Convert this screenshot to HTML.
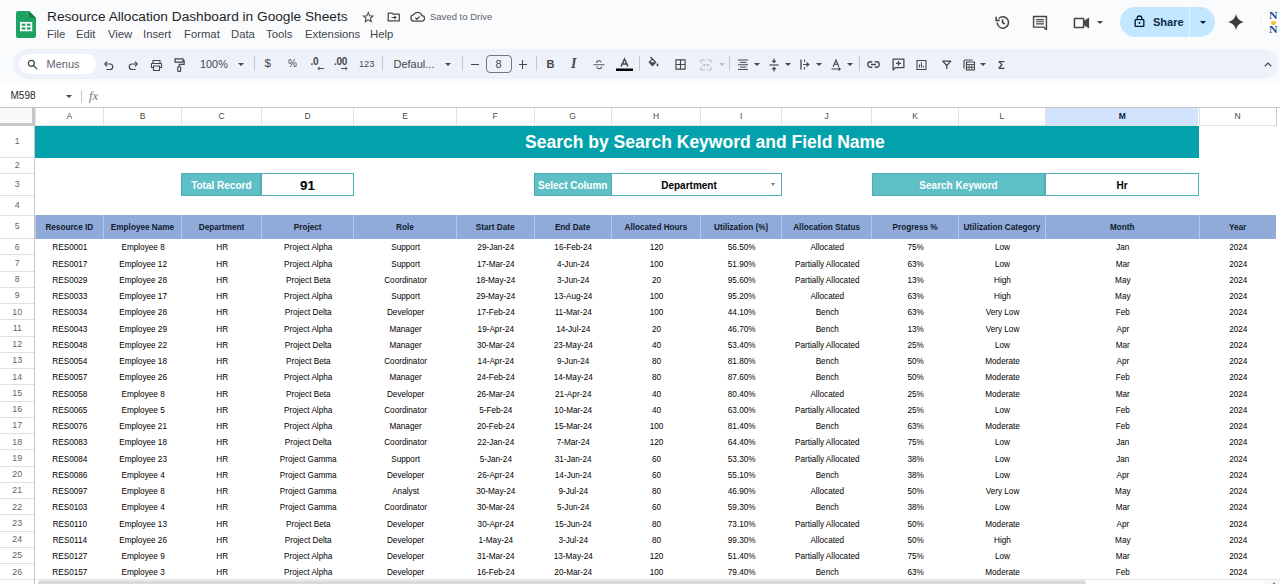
<!DOCTYPE html>
<html><head><meta charset="utf-8">
<style>
*{margin:0;padding:0;box-sizing:border-box}
html,body{width:1280px;height:584px;overflow:hidden;background:#f9fbfd;font-family:"Liberation Sans",sans-serif;position:relative}
.a{position:absolute}
.ico{position:absolute;fill:none;stroke:#444746;stroke-width:1.6}
#doctitle{position:absolute;left:47px;top:9px;font-size:13.7px;color:#1f1f1f;white-space:nowrap;letter-spacing:0}
#menu{position:absolute;left:47px;top:27.8px;font-size:11.3px;color:#444649;white-space:nowrap}
#menu span{position:absolute;top:0}
#saved{position:absolute;left:430px;top:11px;font-size:9.5px;color:#5f6368;white-space:nowrap}
#toolbar{position:absolute;left:13px;top:49px;width:1265px;height:30px;border-radius:15px;background:#edf2fa}
#search{position:absolute;left:19px;top:54px;width:77px;height:20px;border-radius:10px;background:#fff}
.tt{position:absolute;font-size:11px;color:#444746;white-space:nowrap}
.sep{position:absolute;top:56px;width:1px;height:15px;background:#c7c7c7}
.ddt{position:absolute;width:0;height:0;border-left:3px solid transparent;border-right:3px solid transparent;border-top:3px solid #444746}
#fbar{position:absolute;left:0;top:84px;width:1280px;height:24px;background:#fff}
#grid{position:absolute;left:0;top:107px;width:1280px;height:477px;background:#fff}
.colhdr{position:absolute;left:0;width:1280px;background:#fff;border-top:1px solid #c4c7c5}
.ch{position:absolute;text-align:center;font-size:8.5px;color:#444746;border-left:1px solid #e1e3e1;border-bottom:1px solid #e1e3e1}
.ch.sel{background:#d3e3fd;color:#0b57d0;font-weight:bold;color:#041e49}
.rh{position:absolute;left:0;width:34.5px;text-align:center;font-size:8.8px;color:#5f6368;background:#fff}
.hl{position:absolute;left:0;width:34.5px;height:1px;background:#e0e0e0}
.vl{position:absolute;width:1px;background:#c7c7c7}
.title{position:absolute;background:#02a2ad}
.titletxt{position:absolute;font-size:17.5px;font-weight:bold;color:#fff;white-space:nowrap}
.lbl{position:absolute;background:#5ec0c6;border:1px solid #4eaeb5;color:#fff;font-weight:bold;font-size:10px;text-align:center;white-space:nowrap;padding-top:.8px}
.val{position:absolute;background:#fff;border:1px solid #4eaeb5;color:#000;font-weight:bold;font-size:10px;text-align:center;white-space:nowrap;padding-top:.8px}
.val.big{font-size:13.4px}
.val.ddv{padding-right:15px}
.dd{position:absolute;width:0;height:0;border-left:2.5px solid transparent;border-right:2.5px solid transparent;border-top:3px solid #777}
.hdrrow{position:absolute;background:#90abd9}
.th{position:absolute;text-align:center;font-size:8.2px;font-weight:bold;color:#111a2e;white-space:nowrap;border-left:1px solid #b4c8ea;padding-top:.6px}
.td{position:absolute;text-align:center;font-size:8.2px;color:#000;white-space:nowrap;padding-top:1.8px}
#hscroll{position:absolute;left:37.5px;top:579.6px;width:1048px;height:8px;border-radius:3px;background:#dadade;border-top:1.4px solid #ececef}
</style></head>
<body>
<!-- Sheets logo -->
<svg class="a" style="left:16px;top:11px" width="20" height="27" viewBox="0 0 20 27">
<path d="M2 0H13L20 7V25Q20 27 18 27H2Q0 27 0 25V2Q0 0 2 0Z" fill="#1ea362"/>
<path d="M13 0L20 7H15Q13 7 13 5Z" fill="#188038"/>
<rect x="4.8" y="11.8" width="10.6" height="7.6" fill="none" stroke="#fff" stroke-width="1.7"/>
<line x1="4.8" y1="15.6" x2="15.4" y2="15.6" stroke="#fff" stroke-width="1.5"/>
<line x1="10.1" y1="11.8" x2="10.1" y2="19.4" stroke="#fff" stroke-width="1.5"/>
</svg>
<div id="doctitle">Resource Allocation Dashboard in Google Sheets</div>
<div id="menu"><span style="left:0">File</span><span style="left:29px">Edit</span><span style="left:61px">View</span><span style="left:96px">Insert</span><span style="left:137px">Format</span><span style="left:184px">Data</span><span style="left:219px">Tools</span><span style="left:258px">Extensions</span><span style="left:323px">Help</span></div>
<!-- star -->
<svg class="a" style="left:362px;top:11px" width="12.5" height="12.5" viewBox="0 0 24 24"><path d="M12 3l2.6 6.1 6.6.5-5 4.3 1.5 6.5L12 17l-5.7 3.4 1.5-6.5-5-4.3 6.6-.5z" fill="none" stroke="#444746" stroke-width="2"/></svg>
<!-- folder -->
<svg class="a" style="left:386.5px;top:12px" width="13.5" height="10" viewBox="0 0 24 18"><path d="M2 2h7l2 2h11v12H2z" fill="none" stroke="#444746" stroke-width="2.2" stroke-linejoin="round"/><path d="M8 10h8M13 7l3 3-3 3" fill="none" stroke="#444746" stroke-width="2"/></svg>
<!-- cloud -->
<svg class="a" style="left:410px;top:11px" width="15" height="11" viewBox="0 0 24 17"><path d="M6 16H18.5A4.5 4.5 0 0 0 19 7A7 7 0 0 0 6 5.5A5.3 5.3 0 0 0 6 16Z" fill="none" stroke="#444746" stroke-width="2"/><path d="M8.5 10.5l2.5 2.5 4.5-4.5" fill="none" stroke="#444746" stroke-width="2"/></svg>
<div id="saved">Saved to Drive</div>

<!-- right top icons -->
<svg class="a" style="left:994px;top:14px" width="17" height="17" viewBox="0 0 24 24"><path d="M4.5 12a8 8 0 1 0 2.3-5.6" fill="none" stroke="#444746" stroke-width="2.2"/><path d="M3 4v5h5" fill="none" stroke="#444746" stroke-width="2.2"/><path d="M12 7.5V12l3.5 2.3" fill="none" stroke="#444746" stroke-width="2.2"/></svg>
<svg class="a" style="left:1032px;top:15px" width="16" height="15" viewBox="0 0 22 21"><path d="M2 2H20V21L16.5 17H2Z" fill="none" stroke="#444746" stroke-width="2"/><path d="M5.5 6.5h11M5.5 9.5h11M5.5 12.5h11" stroke="#444746" stroke-width="1.6"/></svg>
<svg class="a" style="left:1073px;top:17px" width="17" height="12" viewBox="0 0 24 17"><path d="M2 2H15V15H2Z" fill="none" stroke="#444746" stroke-width="2.2" stroke-linejoin="round"/><path d="M15 6.5L22 2V15L15 10.5" fill="#444746" stroke="#444746" stroke-width="1.5"/></svg>
<div class="ddt" style="left:1097px;top:21px"></div>
<div class="a" style="left:1120px;top:7px;width:95px;height:30px;border-radius:15px;background:#c2e7ff"></div>
<div class="a" style="left:1189px;top:7px;width:1px;height:30px;background:#f9fbfd;opacity:.7"></div>
<svg class="a" style="left:1134px;top:15px" width="11" height="12" viewBox="0 0 16 18"><rect x="1.5" y="7" width="13" height="10" rx="1" fill="none" stroke="#001d35" stroke-width="2"/><path d="M4.5 7V5a3.5 3.5 0 0 1 7 0v2" fill="none" stroke="#001d35" stroke-width="2"/><circle cx="8" cy="12" r="1.5" fill="#001d35"/></svg>
<div class="a" style="left:1153px;top:15.5px;font-size:11px;color:#0d2a45;font-weight:bold;letter-spacing:0">Share</div>
<div class="ddt" style="left:1200px;top:21px;border-top-color:#001d35"></div>
<svg class="a" style="left:1228px;top:14px" width="16" height="16" viewBox="0 0 24 24"><path d="M12 0C13.5 6 16.5 10 24 12C16.5 14 13.5 18 12 24C10.5 18 7.5 14 0 12C7.5 10 10.5 6 12 0Z" fill="#3c3c3e"/></svg>
<div class="a" style="left:1261px;top:10px;width:23px;height:23px;border-radius:12px;background:#fff;border:1px solid #eceff3"></div>
<div class="a" style="left:1268.5px;top:11.5px;font-family:'Liberation Serif',serif;font-size:9.5px;font-weight:bold;color:#1a4f96;line-height:9px;transform:scaleX(1.25);transform-origin:left">N</div>
<div class="a" style="left:1271px;top:20.5px;width:4.5px;height:4.5px;border-radius:2.5px;background:#f2c230"></div>
<div class="a" style="left:1268.5px;top:26px;font-family:'Liberation Serif',serif;font-size:9.5px;font-weight:bold;color:#1a4f96;line-height:9px;transform:scaleX(1.25);transform-origin:left">N</div>

<!-- toolbar -->
<div id="toolbar"></div>
<div id="search"></div>
<svg class="a" style="left:27px;top:59px" width="11" height="11" viewBox="0 0 24 24"><circle cx="9.5" cy="9.5" r="6.5" fill="none" stroke="#444746" stroke-width="2.8"/><path d="M14.5 14.5L22 22" stroke="#444746" stroke-width="2.8"/></svg>
<div class="tt" style="left:46.5px;top:57.5px;font-size:11px;color:#5f6368">Menus</div>
<!-- undo/redo -->
<svg class="a" style="left:103.7px;top:60.7px" width="10" height="10" viewBox="0 0 20 20"><path d="M2 6H12A5.5 5.5 0 0 1 12 17H5" fill="none" stroke="#444746" stroke-width="2.4"/><path d="M6 1.5L1.5 6L6 10.5" fill="none" stroke="#444746" stroke-width="2.4"/></svg>
<svg class="a" style="left:127.7px;top:60.7px" width="10" height="10" viewBox="0 0 20 20"><path d="M18 6H8A5.5 5.5 0 0 0 8 17H15" fill="none" stroke="#444746" stroke-width="2.4"/><path d="M14 1.5L18.5 6L14 10.5" fill="none" stroke="#444746" stroke-width="2.4"/></svg>
<!-- print -->
<svg class="a" style="left:150px;top:59.5px" width="13" height="11" viewBox="0 0 24 22"><path d="M5 6V1H19V6" fill="none" stroke="#444746" stroke-width="2.2"/><path d="M5 15H2V7H22V15H19" fill="none" stroke="#444746" stroke-width="2.2" stroke-linejoin="round"/><path d="M6 12H18V21H6Z" fill="none" stroke="#444746" stroke-width="2.2"/></svg>
<!-- paint format -->
<svg class="a" style="left:174px;top:58px" width="11" height="14" viewBox="0 0 18 24"><path d="M1.5 1.5H15V7H1.5Z" fill="none" stroke="#444746" stroke-width="2.2"/><path d="M15 4.3H17V11H8.5V15" fill="none" stroke="#444746" stroke-width="2"/><rect x="6" y="15" width="5" height="8" rx="1" fill="none" stroke="#444746" stroke-width="2"/></svg>
<div class="tt" style="left:200px;top:58px;font-size:10.9px">100%</div>
<div class="ddt" style="left:237.5px;top:62.5px"></div>
<div class="sep" style="left:254px"></div>
<div class="tt" style="left:264.5px;top:57px;font-size:11.5px">$</div>
<div class="tt" style="left:288px;top:58px;font-size:10px">%</div>
<div class="tt" style="left:310.5px;top:55.5px;font-size:10px;font-weight:bold;letter-spacing:-.3px">.0</div>
<svg class="a" style="left:317px;top:66px" width="7" height="5" viewBox="0 0 9 5"><path d="M9 2.5H1.5M3.5 .5L1 2.5 3.5 4.5" fill="none" stroke="#444746" stroke-width="1.2"/></svg>
<div class="tt" style="left:334px;top:55.5px;font-size:10px;font-weight:bold;letter-spacing:-.3px">.00</div>
<svg class="a" style="left:341px;top:66px" width="7" height="5" viewBox="0 0 9 5"><path d="M0 2.5H7.5M5.5 .5L8 2.5 5.5 4.5" fill="none" stroke="#444746" stroke-width="1.2"/></svg>
<div class="tt" style="left:359px;top:58.5px;font-size:9.2px">123</div>
<div class="sep" style="left:381.5px"></div>
<div class="tt" style="left:393.5px;top:57.5px;font-size:11px">Defaul...</div>
<div class="ddt" style="left:444.5px;top:62.5px"></div>
<div class="sep" style="left:462px"></div>
<div class="a" style="left:470.5px;top:64px;width:8px;height:1.2px;background:#444746"></div>
<div class="a" style="left:486px;top:55px;width:26px;height:18px;border:1px solid #747775;border-radius:4px"></div>
<div class="tt" style="left:495.5px;top:57.5px;font-size:11px">8</div>
<div class="a" style="left:518.5px;top:64px;width:8.5px;height:1.2px;background:#444746"></div>
<div class="a" style="left:522.2px;top:60px;width:1.2px;height:8.5px;background:#444746"></div>
<div class="sep" style="left:536px"></div>
<div class="tt" style="left:546.5px;top:57.5px;font-size:11px;font-weight:bold">B</div>
<div class="tt" style="left:571px;top:55.5px;font-size:14px;font-style:italic;font-family:'Liberation Serif',serif;font-weight:bold">I</div>
<svg class="a" style="left:593px;top:60px" width="12" height="9.5" viewBox="0 0 26 24" preserveAspectRatio="none"><path d="M1 12H25" stroke="#444746" stroke-width="2.2"/><path d="M18 5.5C17 2.5 14.5 2 13 2C9.5 2 7.5 4 8.3 7M8 17C9 21 12 22 13 22C17 22 19 20 18.2 16.5" fill="none" stroke="#444746" stroke-width="2.4"/></svg>
<svg class="a" style="left:615.5px;top:57px" width="17" height="14" viewBox="0 0 17 14"><path d="M5 9.5L8.5 2L12 9.5M6.3 7H10.7" fill="none" stroke="#444746" stroke-width="1.5"/><rect x="0" y="11.5" width="17" height="2.5" fill="#000"/></svg>
<div class="sep" style="left:639px"></div>
<svg class="a" style="left:647px;top:55.5px" width="12" height="13" viewBox="0 0 24 26"><path d="M7 2L11 6M4.5 12.5L11 6L17.5 12.5L11 19Z" fill="none" stroke="#444746" stroke-width="2.4" stroke-linejoin="round"/><path d="M4.5 12.5H17.5L11 19Z" fill="#444746"/><path d="M21 14C22.5 16.5 23 17.5 23 18.5A2 2 0 0 1 19 18.5C19 17.5 19.5 16.5 21 14Z" fill="#444746"/></svg>
<svg class="a" style="left:675px;top:59px" width="11" height="11" viewBox="0 0 24 24"><path d="M2 2H22V22H2ZM12 2V22M2 12H22" fill="none" stroke="#444746" stroke-width="2.4"/></svg>
<svg class="a" style="left:699.5px;top:59px" width="12" height="12" viewBox="0 0 24 24"><path d="M2 8V2H10M14 2H22V8M2 16V22H10M14 22H22V16M5 12H10M8 10L10 12 8 14M19 12H14M16 10L14 12 16 14" fill="none" stroke="#b9bcbd" stroke-width="2.2"/></svg>
<div class="ddt" style="left:719px;top:63px;border-top-color:#b9bcbd"></div>
<div class="sep" style="left:729px"></div>
<svg class="a" style="left:737.5px;top:59px" width="10.5" height="11.5" viewBox="0 0 21 23"><path d="M0 2H21M4 6.75H17M0 11.5H21M4 16.25H17M0 21H21" stroke="#444746" stroke-width="2"/></svg>
<div class="ddt" style="left:753.5px;top:63px"></div>
<svg class="a" style="left:769px;top:58px" width="10" height="14" viewBox="0 0 20 28"><path d="M1 14H19" stroke="#444746" stroke-width="2.4"/><path d="M10 1V9M6.5 5.5L10 9 13.5 5.5M10 27V19M6.5 22.5L10 19 13.5 22.5" fill="none" stroke="#444746" stroke-width="2.4"/></svg>
<div class="ddt" style="left:784.5px;top:63px"></div>
<svg class="a" style="left:799.5px;top:59px" width="10" height="11" viewBox="0 0 20 22"><path d="M2 1V21" stroke="#444746" stroke-width="2.6"/><path d="M9 1V6M9 16V21" stroke="#444746" stroke-width="2"/><path d="M6 11H17M13 7L17.5 11 13 15" fill="none" stroke="#444746" stroke-width="2.4"/></svg>
<div class="ddt" style="left:815.5px;top:63px"></div>
<svg class="a" style="left:831px;top:59px" width="10.5" height="11.5" viewBox="0 0 22 24"><path d="M4.5 16L10.5 2L16.5 16M7 11H14" fill="none" stroke="#444746" stroke-width="2.4"/><path d="M1 21H19M16 18L19.5 21 16 24" fill="none" stroke="#444746" stroke-width="2.2"/></svg>
<div class="ddt" style="left:847px;top:63px"></div>
<div class="sep" style="left:859px"></div>
<svg class="a" style="left:867px;top:60px" width="13" height="9" viewBox="0 0 26 16"><path d="M10.5 2.5H7A5.5 5.5 0 0 0 7 13.5H10.5M15.5 2.5H19A5.5 5.5 0 0 1 19 13.5H15.5M8 8H18" fill="none" stroke="#444746" stroke-width="2.6"/></svg>
<svg class="a" style="left:891.5px;top:58px" width="13" height="14" viewBox="0 0 24 26"><path d="M2 2H22V18H6L2 22.5Z" fill="none" stroke="#444746" stroke-width="2.4" stroke-linejoin="round"/><path d="M12 5.5V14.5M7.5 10H16.5" stroke="#444746" stroke-width="2.4"/></svg>
<svg class="a" style="left:916px;top:59px" width="11" height="12" viewBox="0 0 22 22"><path d="M2 2H20V20H2Z" fill="none" stroke="#444746" stroke-width="2.2"/><path d="M7 16V10M11 16V6M15 16V13" stroke="#444746" stroke-width="2.2"/></svg>
<svg class="a" style="left:942px;top:59.5px" width="9.5" height="9.5" viewBox="0 0 20 20"><path d="M1.5 2.5H18.5L10 11.5ZM10 11V19" fill="none" stroke="#444746" stroke-width="2.6" stroke-linejoin="round"/></svg>
<svg class="a" style="left:962.5px;top:58.5px" width="12.5" height="12" viewBox="0 0 25 24"><path d="M2 19V4Q2 2 4 2H19" fill="none" stroke="#444746" stroke-width="2.2"/><path d="M7 6H23V22H7Z" fill="none" stroke="#444746" stroke-width="2.4" stroke-linejoin="round"/><path d="M7 11H23M7 16.5H23M12.3 11V22M17.7 11V22" stroke="#444746" stroke-width="1.8"/></svg>
<div class="ddt" style="left:980px;top:63px"></div>
<div class="tt" style="left:998px;top:58.5px;font-size:11.5px;font-weight:bold">&#931;</div>
<svg class="a" style="left:1264px;top:62px" width="8" height="5" viewBox="0 0 16 10"><path d="M1.5 8.5L8 2L14.5 8.5" fill="none" stroke="#444746" stroke-width="2.4"/></svg>

<!-- formula bar -->
<div id="fbar"></div>
<div class="tt" style="left:10.5px;top:90px;font-size:10px;color:#1f1f1f">M598</div>
<div class="ddt" style="left:66px;top:94.5px"></div>
<div class="a" style="left:80.5px;top:90px;width:1px;height:13px;background:#c7c7c7"></div>
<div class="tt" style="left:89px;top:89px;font-size:12.5px;font-style:italic;font-family:'Liberation Serif',serif;color:#70757a">fx</div>

<div id="grid"></div>
<div class="colhdr" style="top:107px;height:18.7px"></div>
<div class="ch" style="left:34.5px;width:68.6px;top:108px;height:17.7px;line-height:17.5px">A</div>
<div class="ch" style="left:103.1px;width:77.8px;top:108px;height:17.7px;line-height:17.5px">B</div>
<div class="ch" style="left:180.9px;width:80.3px;top:108px;height:17.7px;line-height:17.5px">C</div>
<div class="ch" style="left:261.2px;width:91.9px;top:108px;height:17.7px;line-height:17.5px">D</div>
<div class="ch" style="left:353.1px;width:102.8px;top:108px;height:17.7px;line-height:17.5px">E</div>
<div class="ch" style="left:455.9px;width:77.6px;top:108px;height:17.7px;line-height:17.5px">F</div>
<div class="ch" style="left:533.5px;width:77.3px;top:108px;height:17.7px;line-height:17.5px">G</div>
<div class="ch" style="left:610.8px;width:89.3px;top:108px;height:17.7px;line-height:17.5px">H</div>
<div class="ch" style="left:700.1px;width:81px;top:108px;height:17.7px;line-height:17.5px">I</div>
<div class="ch" style="left:781.1px;width:90.1px;top:108px;height:17.7px;line-height:17.5px">J</div>
<div class="ch" style="left:871.2px;width:86.7px;top:108px;height:17.7px;line-height:17.5px">K</div>
<div class="ch" style="left:957.9px;width:87px;top:108px;height:17.7px;line-height:17.5px">L</div>
<div class="ch sel" style="left:1044.9px;width:153.6px;top:108px;height:17.7px;line-height:17.5px">M</div>
<div class="ch" style="left:1198.5px;width:77.3px;top:108px;height:17.7px;line-height:17.5px">N</div>
<div class="vl" style="left:1275.8px;top:107px;height:18.7px"></div>
<div class="rh" style="top:125.7px;height:31.9px;line-height:31.9px">1</div>
<div class="rh" style="top:157.6px;height:15.8px;line-height:15.8px">2</div>
<div class="rh" style="top:173.4px;height:22px;line-height:22px">3</div>
<div class="rh" style="top:195.4px;height:20px;line-height:20px">4</div>
<div class="rh" style="top:215.4px;height:23.2px;line-height:23.2px">5</div>
<div class="rh" style="top:238.6px;height:16.25px;line-height:16.25px">6</div>
<div class="rh" style="top:254.85px;height:16.25px;line-height:16.25px">7</div>
<div class="rh" style="top:271.1px;height:16.25px;line-height:16.25px">8</div>
<div class="rh" style="top:287.35px;height:16.25px;line-height:16.25px">9</div>
<div class="rh" style="top:303.6px;height:16.25px;line-height:16.25px">10</div>
<div class="rh" style="top:319.85px;height:16.25px;line-height:16.25px">11</div>
<div class="rh" style="top:336.1px;height:16.25px;line-height:16.25px">12</div>
<div class="rh" style="top:352.35px;height:16.25px;line-height:16.25px">13</div>
<div class="rh" style="top:368.6px;height:16.25px;line-height:16.25px">14</div>
<div class="rh" style="top:384.85px;height:16.25px;line-height:16.25px">15</div>
<div class="rh" style="top:401.1px;height:16.25px;line-height:16.25px">16</div>
<div class="rh" style="top:417.35px;height:16.25px;line-height:16.25px">17</div>
<div class="rh" style="top:433.6px;height:16.25px;line-height:16.25px">18</div>
<div class="rh" style="top:449.85px;height:16.25px;line-height:16.25px">19</div>
<div class="rh" style="top:466.1px;height:16.25px;line-height:16.25px">20</div>
<div class="rh" style="top:482.35px;height:16.25px;line-height:16.25px">21</div>
<div class="rh" style="top:498.6px;height:16.25px;line-height:16.25px">22</div>
<div class="rh" style="top:514.85px;height:16.25px;line-height:16.25px">23</div>
<div class="rh" style="top:531.1px;height:16.25px;line-height:16.25px">24</div>
<div class="rh" style="top:547.35px;height:16.25px;line-height:16.25px">25</div>
<div class="rh" style="top:563.6px;height:16.25px;line-height:16.25px">26</div>
<div class="hl" style="top:157.1px"></div>
<div class="hl" style="top:172.9px"></div>
<div class="hl" style="top:194.9px"></div>
<div class="hl" style="top:214.9px"></div>
<div class="hl" style="top:238.1px"></div>
<div class="hl" style="top:254.35px"></div>
<div class="hl" style="top:270.6px"></div>
<div class="hl" style="top:286.85px"></div>
<div class="hl" style="top:303.1px"></div>
<div class="hl" style="top:319.35px"></div>
<div class="hl" style="top:335.6px"></div>
<div class="hl" style="top:351.85px"></div>
<div class="hl" style="top:368.1px"></div>
<div class="hl" style="top:384.35px"></div>
<div class="hl" style="top:400.6px"></div>
<div class="hl" style="top:416.85px"></div>
<div class="hl" style="top:433.1px"></div>
<div class="hl" style="top:449.35px"></div>
<div class="hl" style="top:465.6px"></div>
<div class="hl" style="top:481.85px"></div>
<div class="hl" style="top:498.1px"></div>
<div class="hl" style="top:514.35px"></div>
<div class="hl" style="top:530.6px"></div>
<div class="hl" style="top:546.85px"></div>
<div class="hl" style="top:563.1px"></div>
<div class="hl" style="top:579.35px"></div>
<div class="vl" style="left:34.2px;top:125.7px;height:460px"></div>
<div class="title" style="left:35px;width:1164px;top:125.7px;height:31.9px"></div>
<div class="titletxt" style="left:525px;padding-top:1.5px;top:125.7px;height:31.9px;line-height:31.9px">Search by Search Keyword and Field Name</div>
<div class="lbl" style="left:181.2px;width:80.3px;top:173.2px;height:22.6px;line-height:22.6px">Total Record</div>
<div class="val big" style="left:261px;width:93px;top:173.2px;height:22.6px;line-height:22.6px">91</div>
<div class="lbl" style="left:534px;width:77.5px;top:173.2px;height:22.6px;line-height:22.6px">Select Column</div>
<div class="val ddv" style="left:611px;width:171px;top:173.2px;height:22.6px;line-height:22.6px">Department</div>
<div class="dd" style="left:771px;top:182.7px"></div>
<div class="lbl" style="left:871.7px;width:173.7px;top:173.2px;height:22.6px;line-height:22.6px">Search Keyword</div>
<div class="val" style="left:1044.9px;width:154.5px;top:173.2px;height:22.6px;line-height:22.6px">Hr</div>
<div class="hdrrow" style="left:35px;width:1241.3px;top:215.4px;height:23.2px"></div>
<div class="th" style="left:34.5px;width:68.6px;top:215.4px;height:23.2px;line-height:23.2px">Resource ID</div>
<div class="th" style="left:103.1px;width:77.8px;top:215.4px;height:23.2px;line-height:23.2px">Employee Name</div>
<div class="th" style="left:180.9px;width:80.3px;top:215.4px;height:23.2px;line-height:23.2px">Department</div>
<div class="th" style="left:261.2px;width:91.9px;top:215.4px;height:23.2px;line-height:23.2px">Project</div>
<div class="th" style="left:353.1px;width:102.8px;top:215.4px;height:23.2px;line-height:23.2px">Role</div>
<div class="th" style="left:455.9px;width:77.6px;top:215.4px;height:23.2px;line-height:23.2px">Start Date</div>
<div class="th" style="left:533.5px;width:77.3px;top:215.4px;height:23.2px;line-height:23.2px">End Date</div>
<div class="th" style="left:610.8px;width:89.3px;top:215.4px;height:23.2px;line-height:23.2px">Allocated Hours</div>
<div class="th" style="left:700.1px;width:81px;top:215.4px;height:23.2px;line-height:23.2px">Utilization (%)</div>
<div class="th" style="left:781.1px;width:90.1px;top:215.4px;height:23.2px;line-height:23.2px">Allocation Status</div>
<div class="th" style="left:871.2px;width:86.7px;top:215.4px;height:23.2px;line-height:23.2px">Progress %</div>
<div class="th" style="left:957.9px;width:87px;top:215.4px;height:23.2px;line-height:23.2px">Utilization Category</div>
<div class="th" style="left:1044.9px;width:153.6px;top:215.4px;height:23.2px;line-height:23.2px">Month</div>
<div class="th" style="left:1198.5px;width:77.3px;top:215.4px;height:23.2px;line-height:23.2px">Year</div>
<div class="td" style="left:35.6px;width:68.6px;top:238.6px;height:16.25px;line-height:16.25px">RES0001</div>
<div class="td" style="left:104.2px;width:77.8px;top:238.6px;height:16.25px;line-height:16.25px">Employee 8</div>
<div class="td" style="left:182px;width:80.3px;top:238.6px;height:16.25px;line-height:16.25px">HR</div>
<div class="td" style="left:262.3px;width:91.9px;top:238.6px;height:16.25px;line-height:16.25px">Project Alpha</div>
<div class="td" style="left:354.2px;width:102.8px;top:238.6px;height:16.25px;line-height:16.25px">Support</div>
<div class="td" style="left:457px;width:77.6px;top:238.6px;height:16.25px;line-height:16.25px">29-Jan-24</div>
<div class="td" style="left:534.6px;width:77.3px;top:238.6px;height:16.25px;line-height:16.25px">16-Feb-24</div>
<div class="td" style="left:611.9px;width:89.3px;top:238.6px;height:16.25px;line-height:16.25px">120</div>
<div class="td" style="left:701.2px;width:81px;top:238.6px;height:16.25px;line-height:16.25px">56.50%</div>
<div class="td" style="left:782.2px;width:90.1px;top:238.6px;height:16.25px;line-height:16.25px">Allocated</div>
<div class="td" style="left:872.3px;width:86.7px;top:238.6px;height:16.25px;line-height:16.25px">75%</div>
<div class="td" style="left:959px;width:87px;top:238.6px;height:16.25px;line-height:16.25px">Low</div>
<div class="td" style="left:1046px;width:153.6px;top:238.6px;height:16.25px;line-height:16.25px">Jan</div>
<div class="td" style="left:1199.6px;width:77.3px;top:238.6px;height:16.25px;line-height:16.25px">2024</div>
<div class="td" style="left:35.6px;width:68.6px;top:254.85px;height:16.25px;line-height:16.25px">RES0017</div>
<div class="td" style="left:104.2px;width:77.8px;top:254.85px;height:16.25px;line-height:16.25px">Employee 12</div>
<div class="td" style="left:182px;width:80.3px;top:254.85px;height:16.25px;line-height:16.25px">HR</div>
<div class="td" style="left:262.3px;width:91.9px;top:254.85px;height:16.25px;line-height:16.25px">Project Alpha</div>
<div class="td" style="left:354.2px;width:102.8px;top:254.85px;height:16.25px;line-height:16.25px">Support</div>
<div class="td" style="left:457px;width:77.6px;top:254.85px;height:16.25px;line-height:16.25px">17-Mar-24</div>
<div class="td" style="left:534.6px;width:77.3px;top:254.85px;height:16.25px;line-height:16.25px">4-Jun-24</div>
<div class="td" style="left:611.9px;width:89.3px;top:254.85px;height:16.25px;line-height:16.25px">100</div>
<div class="td" style="left:701.2px;width:81px;top:254.85px;height:16.25px;line-height:16.25px">51.90%</div>
<div class="td" style="left:782.2px;width:90.1px;top:254.85px;height:16.25px;line-height:16.25px">Partially Allocated</div>
<div class="td" style="left:872.3px;width:86.7px;top:254.85px;height:16.25px;line-height:16.25px">63%</div>
<div class="td" style="left:959px;width:87px;top:254.85px;height:16.25px;line-height:16.25px">Low</div>
<div class="td" style="left:1046px;width:153.6px;top:254.85px;height:16.25px;line-height:16.25px">Mar</div>
<div class="td" style="left:1199.6px;width:77.3px;top:254.85px;height:16.25px;line-height:16.25px">2024</div>
<div class="td" style="left:35.6px;width:68.6px;top:271.1px;height:16.25px;line-height:16.25px">RES0029</div>
<div class="td" style="left:104.2px;width:77.8px;top:271.1px;height:16.25px;line-height:16.25px">Employee 28</div>
<div class="td" style="left:182px;width:80.3px;top:271.1px;height:16.25px;line-height:16.25px">HR</div>
<div class="td" style="left:262.3px;width:91.9px;top:271.1px;height:16.25px;line-height:16.25px">Project Beta</div>
<div class="td" style="left:354.2px;width:102.8px;top:271.1px;height:16.25px;line-height:16.25px">Coordinator</div>
<div class="td" style="left:457px;width:77.6px;top:271.1px;height:16.25px;line-height:16.25px">18-May-24</div>
<div class="td" style="left:534.6px;width:77.3px;top:271.1px;height:16.25px;line-height:16.25px">3-Jun-24</div>
<div class="td" style="left:611.9px;width:89.3px;top:271.1px;height:16.25px;line-height:16.25px">20</div>
<div class="td" style="left:701.2px;width:81px;top:271.1px;height:16.25px;line-height:16.25px">95.60%</div>
<div class="td" style="left:782.2px;width:90.1px;top:271.1px;height:16.25px;line-height:16.25px">Partially Allocated</div>
<div class="td" style="left:872.3px;width:86.7px;top:271.1px;height:16.25px;line-height:16.25px">13%</div>
<div class="td" style="left:959px;width:87px;top:271.1px;height:16.25px;line-height:16.25px">High</div>
<div class="td" style="left:1046px;width:153.6px;top:271.1px;height:16.25px;line-height:16.25px">May</div>
<div class="td" style="left:1199.6px;width:77.3px;top:271.1px;height:16.25px;line-height:16.25px">2024</div>
<div class="td" style="left:35.6px;width:68.6px;top:287.35px;height:16.25px;line-height:16.25px">RES0033</div>
<div class="td" style="left:104.2px;width:77.8px;top:287.35px;height:16.25px;line-height:16.25px">Employee 17</div>
<div class="td" style="left:182px;width:80.3px;top:287.35px;height:16.25px;line-height:16.25px">HR</div>
<div class="td" style="left:262.3px;width:91.9px;top:287.35px;height:16.25px;line-height:16.25px">Project Alpha</div>
<div class="td" style="left:354.2px;width:102.8px;top:287.35px;height:16.25px;line-height:16.25px">Support</div>
<div class="td" style="left:457px;width:77.6px;top:287.35px;height:16.25px;line-height:16.25px">29-May-24</div>
<div class="td" style="left:534.6px;width:77.3px;top:287.35px;height:16.25px;line-height:16.25px">13-Aug-24</div>
<div class="td" style="left:611.9px;width:89.3px;top:287.35px;height:16.25px;line-height:16.25px">100</div>
<div class="td" style="left:701.2px;width:81px;top:287.35px;height:16.25px;line-height:16.25px">95.20%</div>
<div class="td" style="left:782.2px;width:90.1px;top:287.35px;height:16.25px;line-height:16.25px">Allocated</div>
<div class="td" style="left:872.3px;width:86.7px;top:287.35px;height:16.25px;line-height:16.25px">63%</div>
<div class="td" style="left:959px;width:87px;top:287.35px;height:16.25px;line-height:16.25px">High</div>
<div class="td" style="left:1046px;width:153.6px;top:287.35px;height:16.25px;line-height:16.25px">May</div>
<div class="td" style="left:1199.6px;width:77.3px;top:287.35px;height:16.25px;line-height:16.25px">2024</div>
<div class="td" style="left:35.6px;width:68.6px;top:303.6px;height:16.25px;line-height:16.25px">RES0034</div>
<div class="td" style="left:104.2px;width:77.8px;top:303.6px;height:16.25px;line-height:16.25px">Employee 28</div>
<div class="td" style="left:182px;width:80.3px;top:303.6px;height:16.25px;line-height:16.25px">HR</div>
<div class="td" style="left:262.3px;width:91.9px;top:303.6px;height:16.25px;line-height:16.25px">Project Delta</div>
<div class="td" style="left:354.2px;width:102.8px;top:303.6px;height:16.25px;line-height:16.25px">Developer</div>
<div class="td" style="left:457px;width:77.6px;top:303.6px;height:16.25px;line-height:16.25px">17-Feb-24</div>
<div class="td" style="left:534.6px;width:77.3px;top:303.6px;height:16.25px;line-height:16.25px">11-Mar-24</div>
<div class="td" style="left:611.9px;width:89.3px;top:303.6px;height:16.25px;line-height:16.25px">100</div>
<div class="td" style="left:701.2px;width:81px;top:303.6px;height:16.25px;line-height:16.25px">44.10%</div>
<div class="td" style="left:782.2px;width:90.1px;top:303.6px;height:16.25px;line-height:16.25px">Bench</div>
<div class="td" style="left:872.3px;width:86.7px;top:303.6px;height:16.25px;line-height:16.25px">63%</div>
<div class="td" style="left:959px;width:87px;top:303.6px;height:16.25px;line-height:16.25px">Very Low</div>
<div class="td" style="left:1046px;width:153.6px;top:303.6px;height:16.25px;line-height:16.25px">Feb</div>
<div class="td" style="left:1199.6px;width:77.3px;top:303.6px;height:16.25px;line-height:16.25px">2024</div>
<div class="td" style="left:35.6px;width:68.6px;top:319.85px;height:16.25px;line-height:16.25px">RES0043</div>
<div class="td" style="left:104.2px;width:77.8px;top:319.85px;height:16.25px;line-height:16.25px">Employee 29</div>
<div class="td" style="left:182px;width:80.3px;top:319.85px;height:16.25px;line-height:16.25px">HR</div>
<div class="td" style="left:262.3px;width:91.9px;top:319.85px;height:16.25px;line-height:16.25px">Project Alpha</div>
<div class="td" style="left:354.2px;width:102.8px;top:319.85px;height:16.25px;line-height:16.25px">Manager</div>
<div class="td" style="left:457px;width:77.6px;top:319.85px;height:16.25px;line-height:16.25px">19-Apr-24</div>
<div class="td" style="left:534.6px;width:77.3px;top:319.85px;height:16.25px;line-height:16.25px">14-Jul-24</div>
<div class="td" style="left:611.9px;width:89.3px;top:319.85px;height:16.25px;line-height:16.25px">20</div>
<div class="td" style="left:701.2px;width:81px;top:319.85px;height:16.25px;line-height:16.25px">46.70%</div>
<div class="td" style="left:782.2px;width:90.1px;top:319.85px;height:16.25px;line-height:16.25px">Bench</div>
<div class="td" style="left:872.3px;width:86.7px;top:319.85px;height:16.25px;line-height:16.25px">13%</div>
<div class="td" style="left:959px;width:87px;top:319.85px;height:16.25px;line-height:16.25px">Very Low</div>
<div class="td" style="left:1046px;width:153.6px;top:319.85px;height:16.25px;line-height:16.25px">Apr</div>
<div class="td" style="left:1199.6px;width:77.3px;top:319.85px;height:16.25px;line-height:16.25px">2024</div>
<div class="td" style="left:35.6px;width:68.6px;top:336.1px;height:16.25px;line-height:16.25px">RES0048</div>
<div class="td" style="left:104.2px;width:77.8px;top:336.1px;height:16.25px;line-height:16.25px">Employee 22</div>
<div class="td" style="left:182px;width:80.3px;top:336.1px;height:16.25px;line-height:16.25px">HR</div>
<div class="td" style="left:262.3px;width:91.9px;top:336.1px;height:16.25px;line-height:16.25px">Project Delta</div>
<div class="td" style="left:354.2px;width:102.8px;top:336.1px;height:16.25px;line-height:16.25px">Manager</div>
<div class="td" style="left:457px;width:77.6px;top:336.1px;height:16.25px;line-height:16.25px">30-Mar-24</div>
<div class="td" style="left:534.6px;width:77.3px;top:336.1px;height:16.25px;line-height:16.25px">23-May-24</div>
<div class="td" style="left:611.9px;width:89.3px;top:336.1px;height:16.25px;line-height:16.25px">40</div>
<div class="td" style="left:701.2px;width:81px;top:336.1px;height:16.25px;line-height:16.25px">53.40%</div>
<div class="td" style="left:782.2px;width:90.1px;top:336.1px;height:16.25px;line-height:16.25px">Partially Allocated</div>
<div class="td" style="left:872.3px;width:86.7px;top:336.1px;height:16.25px;line-height:16.25px">25%</div>
<div class="td" style="left:959px;width:87px;top:336.1px;height:16.25px;line-height:16.25px">Low</div>
<div class="td" style="left:1046px;width:153.6px;top:336.1px;height:16.25px;line-height:16.25px">Mar</div>
<div class="td" style="left:1199.6px;width:77.3px;top:336.1px;height:16.25px;line-height:16.25px">2024</div>
<div class="td" style="left:35.6px;width:68.6px;top:352.35px;height:16.25px;line-height:16.25px">RES0054</div>
<div class="td" style="left:104.2px;width:77.8px;top:352.35px;height:16.25px;line-height:16.25px">Employee 18</div>
<div class="td" style="left:182px;width:80.3px;top:352.35px;height:16.25px;line-height:16.25px">HR</div>
<div class="td" style="left:262.3px;width:91.9px;top:352.35px;height:16.25px;line-height:16.25px">Project Beta</div>
<div class="td" style="left:354.2px;width:102.8px;top:352.35px;height:16.25px;line-height:16.25px">Coordinator</div>
<div class="td" style="left:457px;width:77.6px;top:352.35px;height:16.25px;line-height:16.25px">14-Apr-24</div>
<div class="td" style="left:534.6px;width:77.3px;top:352.35px;height:16.25px;line-height:16.25px">9-Jun-24</div>
<div class="td" style="left:611.9px;width:89.3px;top:352.35px;height:16.25px;line-height:16.25px">80</div>
<div class="td" style="left:701.2px;width:81px;top:352.35px;height:16.25px;line-height:16.25px">81.80%</div>
<div class="td" style="left:782.2px;width:90.1px;top:352.35px;height:16.25px;line-height:16.25px">Bench</div>
<div class="td" style="left:872.3px;width:86.7px;top:352.35px;height:16.25px;line-height:16.25px">50%</div>
<div class="td" style="left:959px;width:87px;top:352.35px;height:16.25px;line-height:16.25px">Moderate</div>
<div class="td" style="left:1046px;width:153.6px;top:352.35px;height:16.25px;line-height:16.25px">Apr</div>
<div class="td" style="left:1199.6px;width:77.3px;top:352.35px;height:16.25px;line-height:16.25px">2024</div>
<div class="td" style="left:35.6px;width:68.6px;top:368.6px;height:16.25px;line-height:16.25px">RES0057</div>
<div class="td" style="left:104.2px;width:77.8px;top:368.6px;height:16.25px;line-height:16.25px">Employee 26</div>
<div class="td" style="left:182px;width:80.3px;top:368.6px;height:16.25px;line-height:16.25px">HR</div>
<div class="td" style="left:262.3px;width:91.9px;top:368.6px;height:16.25px;line-height:16.25px">Project Alpha</div>
<div class="td" style="left:354.2px;width:102.8px;top:368.6px;height:16.25px;line-height:16.25px">Manager</div>
<div class="td" style="left:457px;width:77.6px;top:368.6px;height:16.25px;line-height:16.25px">24-Feb-24</div>
<div class="td" style="left:534.6px;width:77.3px;top:368.6px;height:16.25px;line-height:16.25px">14-May-24</div>
<div class="td" style="left:611.9px;width:89.3px;top:368.6px;height:16.25px;line-height:16.25px">80</div>
<div class="td" style="left:701.2px;width:81px;top:368.6px;height:16.25px;line-height:16.25px">87.60%</div>
<div class="td" style="left:782.2px;width:90.1px;top:368.6px;height:16.25px;line-height:16.25px">Bench</div>
<div class="td" style="left:872.3px;width:86.7px;top:368.6px;height:16.25px;line-height:16.25px">50%</div>
<div class="td" style="left:959px;width:87px;top:368.6px;height:16.25px;line-height:16.25px">Moderate</div>
<div class="td" style="left:1046px;width:153.6px;top:368.6px;height:16.25px;line-height:16.25px">Feb</div>
<div class="td" style="left:1199.6px;width:77.3px;top:368.6px;height:16.25px;line-height:16.25px">2024</div>
<div class="td" style="left:35.6px;width:68.6px;top:384.85px;height:16.25px;line-height:16.25px">RES0058</div>
<div class="td" style="left:104.2px;width:77.8px;top:384.85px;height:16.25px;line-height:16.25px">Employee 8</div>
<div class="td" style="left:182px;width:80.3px;top:384.85px;height:16.25px;line-height:16.25px">HR</div>
<div class="td" style="left:262.3px;width:91.9px;top:384.85px;height:16.25px;line-height:16.25px">Project Beta</div>
<div class="td" style="left:354.2px;width:102.8px;top:384.85px;height:16.25px;line-height:16.25px">Developer</div>
<div class="td" style="left:457px;width:77.6px;top:384.85px;height:16.25px;line-height:16.25px">26-Mar-24</div>
<div class="td" style="left:534.6px;width:77.3px;top:384.85px;height:16.25px;line-height:16.25px">21-Apr-24</div>
<div class="td" style="left:611.9px;width:89.3px;top:384.85px;height:16.25px;line-height:16.25px">40</div>
<div class="td" style="left:701.2px;width:81px;top:384.85px;height:16.25px;line-height:16.25px">80.40%</div>
<div class="td" style="left:782.2px;width:90.1px;top:384.85px;height:16.25px;line-height:16.25px">Allocated</div>
<div class="td" style="left:872.3px;width:86.7px;top:384.85px;height:16.25px;line-height:16.25px">25%</div>
<div class="td" style="left:959px;width:87px;top:384.85px;height:16.25px;line-height:16.25px">Moderate</div>
<div class="td" style="left:1046px;width:153.6px;top:384.85px;height:16.25px;line-height:16.25px">Mar</div>
<div class="td" style="left:1199.6px;width:77.3px;top:384.85px;height:16.25px;line-height:16.25px">2024</div>
<div class="td" style="left:35.6px;width:68.6px;top:401.1px;height:16.25px;line-height:16.25px">RES0065</div>
<div class="td" style="left:104.2px;width:77.8px;top:401.1px;height:16.25px;line-height:16.25px">Employee 5</div>
<div class="td" style="left:182px;width:80.3px;top:401.1px;height:16.25px;line-height:16.25px">HR</div>
<div class="td" style="left:262.3px;width:91.9px;top:401.1px;height:16.25px;line-height:16.25px">Project Alpha</div>
<div class="td" style="left:354.2px;width:102.8px;top:401.1px;height:16.25px;line-height:16.25px">Coordinator</div>
<div class="td" style="left:457px;width:77.6px;top:401.1px;height:16.25px;line-height:16.25px">5-Feb-24</div>
<div class="td" style="left:534.6px;width:77.3px;top:401.1px;height:16.25px;line-height:16.25px">10-Mar-24</div>
<div class="td" style="left:611.9px;width:89.3px;top:401.1px;height:16.25px;line-height:16.25px">40</div>
<div class="td" style="left:701.2px;width:81px;top:401.1px;height:16.25px;line-height:16.25px">63.00%</div>
<div class="td" style="left:782.2px;width:90.1px;top:401.1px;height:16.25px;line-height:16.25px">Partially Allocated</div>
<div class="td" style="left:872.3px;width:86.7px;top:401.1px;height:16.25px;line-height:16.25px">25%</div>
<div class="td" style="left:959px;width:87px;top:401.1px;height:16.25px;line-height:16.25px">Low</div>
<div class="td" style="left:1046px;width:153.6px;top:401.1px;height:16.25px;line-height:16.25px">Feb</div>
<div class="td" style="left:1199.6px;width:77.3px;top:401.1px;height:16.25px;line-height:16.25px">2024</div>
<div class="td" style="left:35.6px;width:68.6px;top:417.35px;height:16.25px;line-height:16.25px">RES0076</div>
<div class="td" style="left:104.2px;width:77.8px;top:417.35px;height:16.25px;line-height:16.25px">Employee 21</div>
<div class="td" style="left:182px;width:80.3px;top:417.35px;height:16.25px;line-height:16.25px">HR</div>
<div class="td" style="left:262.3px;width:91.9px;top:417.35px;height:16.25px;line-height:16.25px">Project Alpha</div>
<div class="td" style="left:354.2px;width:102.8px;top:417.35px;height:16.25px;line-height:16.25px">Manager</div>
<div class="td" style="left:457px;width:77.6px;top:417.35px;height:16.25px;line-height:16.25px">20-Feb-24</div>
<div class="td" style="left:534.6px;width:77.3px;top:417.35px;height:16.25px;line-height:16.25px">15-Mar-24</div>
<div class="td" style="left:611.9px;width:89.3px;top:417.35px;height:16.25px;line-height:16.25px">100</div>
<div class="td" style="left:701.2px;width:81px;top:417.35px;height:16.25px;line-height:16.25px">81.40%</div>
<div class="td" style="left:782.2px;width:90.1px;top:417.35px;height:16.25px;line-height:16.25px">Bench</div>
<div class="td" style="left:872.3px;width:86.7px;top:417.35px;height:16.25px;line-height:16.25px">63%</div>
<div class="td" style="left:959px;width:87px;top:417.35px;height:16.25px;line-height:16.25px">Moderate</div>
<div class="td" style="left:1046px;width:153.6px;top:417.35px;height:16.25px;line-height:16.25px">Feb</div>
<div class="td" style="left:1199.6px;width:77.3px;top:417.35px;height:16.25px;line-height:16.25px">2024</div>
<div class="td" style="left:35.6px;width:68.6px;top:433.6px;height:16.25px;line-height:16.25px">RES0083</div>
<div class="td" style="left:104.2px;width:77.8px;top:433.6px;height:16.25px;line-height:16.25px">Employee 18</div>
<div class="td" style="left:182px;width:80.3px;top:433.6px;height:16.25px;line-height:16.25px">HR</div>
<div class="td" style="left:262.3px;width:91.9px;top:433.6px;height:16.25px;line-height:16.25px">Project Delta</div>
<div class="td" style="left:354.2px;width:102.8px;top:433.6px;height:16.25px;line-height:16.25px">Coordinator</div>
<div class="td" style="left:457px;width:77.6px;top:433.6px;height:16.25px;line-height:16.25px">22-Jan-24</div>
<div class="td" style="left:534.6px;width:77.3px;top:433.6px;height:16.25px;line-height:16.25px">7-Mar-24</div>
<div class="td" style="left:611.9px;width:89.3px;top:433.6px;height:16.25px;line-height:16.25px">120</div>
<div class="td" style="left:701.2px;width:81px;top:433.6px;height:16.25px;line-height:16.25px">64.40%</div>
<div class="td" style="left:782.2px;width:90.1px;top:433.6px;height:16.25px;line-height:16.25px">Partially Allocated</div>
<div class="td" style="left:872.3px;width:86.7px;top:433.6px;height:16.25px;line-height:16.25px">75%</div>
<div class="td" style="left:959px;width:87px;top:433.6px;height:16.25px;line-height:16.25px">Low</div>
<div class="td" style="left:1046px;width:153.6px;top:433.6px;height:16.25px;line-height:16.25px">Jan</div>
<div class="td" style="left:1199.6px;width:77.3px;top:433.6px;height:16.25px;line-height:16.25px">2024</div>
<div class="td" style="left:35.6px;width:68.6px;top:449.85px;height:16.25px;line-height:16.25px">RES0084</div>
<div class="td" style="left:104.2px;width:77.8px;top:449.85px;height:16.25px;line-height:16.25px">Employee 23</div>
<div class="td" style="left:182px;width:80.3px;top:449.85px;height:16.25px;line-height:16.25px">HR</div>
<div class="td" style="left:262.3px;width:91.9px;top:449.85px;height:16.25px;line-height:16.25px">Project Gamma</div>
<div class="td" style="left:354.2px;width:102.8px;top:449.85px;height:16.25px;line-height:16.25px">Support</div>
<div class="td" style="left:457px;width:77.6px;top:449.85px;height:16.25px;line-height:16.25px">5-Jan-24</div>
<div class="td" style="left:534.6px;width:77.3px;top:449.85px;height:16.25px;line-height:16.25px">31-Jan-24</div>
<div class="td" style="left:611.9px;width:89.3px;top:449.85px;height:16.25px;line-height:16.25px">60</div>
<div class="td" style="left:701.2px;width:81px;top:449.85px;height:16.25px;line-height:16.25px">53.30%</div>
<div class="td" style="left:782.2px;width:90.1px;top:449.85px;height:16.25px;line-height:16.25px">Partially Allocated</div>
<div class="td" style="left:872.3px;width:86.7px;top:449.85px;height:16.25px;line-height:16.25px">38%</div>
<div class="td" style="left:959px;width:87px;top:449.85px;height:16.25px;line-height:16.25px">Low</div>
<div class="td" style="left:1046px;width:153.6px;top:449.85px;height:16.25px;line-height:16.25px">Jan</div>
<div class="td" style="left:1199.6px;width:77.3px;top:449.85px;height:16.25px;line-height:16.25px">2024</div>
<div class="td" style="left:35.6px;width:68.6px;top:466.1px;height:16.25px;line-height:16.25px">RES0086</div>
<div class="td" style="left:104.2px;width:77.8px;top:466.1px;height:16.25px;line-height:16.25px">Employee 4</div>
<div class="td" style="left:182px;width:80.3px;top:466.1px;height:16.25px;line-height:16.25px">HR</div>
<div class="td" style="left:262.3px;width:91.9px;top:466.1px;height:16.25px;line-height:16.25px">Project Gamma</div>
<div class="td" style="left:354.2px;width:102.8px;top:466.1px;height:16.25px;line-height:16.25px">Developer</div>
<div class="td" style="left:457px;width:77.6px;top:466.1px;height:16.25px;line-height:16.25px">26-Apr-24</div>
<div class="td" style="left:534.6px;width:77.3px;top:466.1px;height:16.25px;line-height:16.25px">14-Jun-24</div>
<div class="td" style="left:611.9px;width:89.3px;top:466.1px;height:16.25px;line-height:16.25px">60</div>
<div class="td" style="left:701.2px;width:81px;top:466.1px;height:16.25px;line-height:16.25px">55.10%</div>
<div class="td" style="left:782.2px;width:90.1px;top:466.1px;height:16.25px;line-height:16.25px">Bench</div>
<div class="td" style="left:872.3px;width:86.7px;top:466.1px;height:16.25px;line-height:16.25px">38%</div>
<div class="td" style="left:959px;width:87px;top:466.1px;height:16.25px;line-height:16.25px">Low</div>
<div class="td" style="left:1046px;width:153.6px;top:466.1px;height:16.25px;line-height:16.25px">Apr</div>
<div class="td" style="left:1199.6px;width:77.3px;top:466.1px;height:16.25px;line-height:16.25px">2024</div>
<div class="td" style="left:35.6px;width:68.6px;top:482.35px;height:16.25px;line-height:16.25px">RES0097</div>
<div class="td" style="left:104.2px;width:77.8px;top:482.35px;height:16.25px;line-height:16.25px">Employee 8</div>
<div class="td" style="left:182px;width:80.3px;top:482.35px;height:16.25px;line-height:16.25px">HR</div>
<div class="td" style="left:262.3px;width:91.9px;top:482.35px;height:16.25px;line-height:16.25px">Project Gamma</div>
<div class="td" style="left:354.2px;width:102.8px;top:482.35px;height:16.25px;line-height:16.25px">Analyst</div>
<div class="td" style="left:457px;width:77.6px;top:482.35px;height:16.25px;line-height:16.25px">30-May-24</div>
<div class="td" style="left:534.6px;width:77.3px;top:482.35px;height:16.25px;line-height:16.25px">9-Jul-24</div>
<div class="td" style="left:611.9px;width:89.3px;top:482.35px;height:16.25px;line-height:16.25px">80</div>
<div class="td" style="left:701.2px;width:81px;top:482.35px;height:16.25px;line-height:16.25px">46.90%</div>
<div class="td" style="left:782.2px;width:90.1px;top:482.35px;height:16.25px;line-height:16.25px">Allocated</div>
<div class="td" style="left:872.3px;width:86.7px;top:482.35px;height:16.25px;line-height:16.25px">50%</div>
<div class="td" style="left:959px;width:87px;top:482.35px;height:16.25px;line-height:16.25px">Very Low</div>
<div class="td" style="left:1046px;width:153.6px;top:482.35px;height:16.25px;line-height:16.25px">May</div>
<div class="td" style="left:1199.6px;width:77.3px;top:482.35px;height:16.25px;line-height:16.25px">2024</div>
<div class="td" style="left:35.6px;width:68.6px;top:498.6px;height:16.25px;line-height:16.25px">RES0103</div>
<div class="td" style="left:104.2px;width:77.8px;top:498.6px;height:16.25px;line-height:16.25px">Employee 4</div>
<div class="td" style="left:182px;width:80.3px;top:498.6px;height:16.25px;line-height:16.25px">HR</div>
<div class="td" style="left:262.3px;width:91.9px;top:498.6px;height:16.25px;line-height:16.25px">Project Gamma</div>
<div class="td" style="left:354.2px;width:102.8px;top:498.6px;height:16.25px;line-height:16.25px">Coordinator</div>
<div class="td" style="left:457px;width:77.6px;top:498.6px;height:16.25px;line-height:16.25px">30-Mar-24</div>
<div class="td" style="left:534.6px;width:77.3px;top:498.6px;height:16.25px;line-height:16.25px">5-Jun-24</div>
<div class="td" style="left:611.9px;width:89.3px;top:498.6px;height:16.25px;line-height:16.25px">60</div>
<div class="td" style="left:701.2px;width:81px;top:498.6px;height:16.25px;line-height:16.25px">59.30%</div>
<div class="td" style="left:782.2px;width:90.1px;top:498.6px;height:16.25px;line-height:16.25px">Bench</div>
<div class="td" style="left:872.3px;width:86.7px;top:498.6px;height:16.25px;line-height:16.25px">38%</div>
<div class="td" style="left:959px;width:87px;top:498.6px;height:16.25px;line-height:16.25px">Low</div>
<div class="td" style="left:1046px;width:153.6px;top:498.6px;height:16.25px;line-height:16.25px">Mar</div>
<div class="td" style="left:1199.6px;width:77.3px;top:498.6px;height:16.25px;line-height:16.25px">2024</div>
<div class="td" style="left:35.6px;width:68.6px;top:514.85px;height:16.25px;line-height:16.25px">RES0110</div>
<div class="td" style="left:104.2px;width:77.8px;top:514.85px;height:16.25px;line-height:16.25px">Employee 13</div>
<div class="td" style="left:182px;width:80.3px;top:514.85px;height:16.25px;line-height:16.25px">HR</div>
<div class="td" style="left:262.3px;width:91.9px;top:514.85px;height:16.25px;line-height:16.25px">Project Beta</div>
<div class="td" style="left:354.2px;width:102.8px;top:514.85px;height:16.25px;line-height:16.25px">Developer</div>
<div class="td" style="left:457px;width:77.6px;top:514.85px;height:16.25px;line-height:16.25px">30-Apr-24</div>
<div class="td" style="left:534.6px;width:77.3px;top:514.85px;height:16.25px;line-height:16.25px">15-Jun-24</div>
<div class="td" style="left:611.9px;width:89.3px;top:514.85px;height:16.25px;line-height:16.25px">80</div>
<div class="td" style="left:701.2px;width:81px;top:514.85px;height:16.25px;line-height:16.25px">73.10%</div>
<div class="td" style="left:782.2px;width:90.1px;top:514.85px;height:16.25px;line-height:16.25px">Partially Allocated</div>
<div class="td" style="left:872.3px;width:86.7px;top:514.85px;height:16.25px;line-height:16.25px">50%</div>
<div class="td" style="left:959px;width:87px;top:514.85px;height:16.25px;line-height:16.25px">Moderate</div>
<div class="td" style="left:1046px;width:153.6px;top:514.85px;height:16.25px;line-height:16.25px">Apr</div>
<div class="td" style="left:1199.6px;width:77.3px;top:514.85px;height:16.25px;line-height:16.25px">2024</div>
<div class="td" style="left:35.6px;width:68.6px;top:531.1px;height:16.25px;line-height:16.25px">RES0114</div>
<div class="td" style="left:104.2px;width:77.8px;top:531.1px;height:16.25px;line-height:16.25px">Employee 26</div>
<div class="td" style="left:182px;width:80.3px;top:531.1px;height:16.25px;line-height:16.25px">HR</div>
<div class="td" style="left:262.3px;width:91.9px;top:531.1px;height:16.25px;line-height:16.25px">Project Delta</div>
<div class="td" style="left:354.2px;width:102.8px;top:531.1px;height:16.25px;line-height:16.25px">Developer</div>
<div class="td" style="left:457px;width:77.6px;top:531.1px;height:16.25px;line-height:16.25px">1-May-24</div>
<div class="td" style="left:534.6px;width:77.3px;top:531.1px;height:16.25px;line-height:16.25px">3-Jul-24</div>
<div class="td" style="left:611.9px;width:89.3px;top:531.1px;height:16.25px;line-height:16.25px">80</div>
<div class="td" style="left:701.2px;width:81px;top:531.1px;height:16.25px;line-height:16.25px">99.30%</div>
<div class="td" style="left:782.2px;width:90.1px;top:531.1px;height:16.25px;line-height:16.25px">Allocated</div>
<div class="td" style="left:872.3px;width:86.7px;top:531.1px;height:16.25px;line-height:16.25px">50%</div>
<div class="td" style="left:959px;width:87px;top:531.1px;height:16.25px;line-height:16.25px">High</div>
<div class="td" style="left:1046px;width:153.6px;top:531.1px;height:16.25px;line-height:16.25px">May</div>
<div class="td" style="left:1199.6px;width:77.3px;top:531.1px;height:16.25px;line-height:16.25px">2024</div>
<div class="td" style="left:35.6px;width:68.6px;top:547.35px;height:16.25px;line-height:16.25px">RES0127</div>
<div class="td" style="left:104.2px;width:77.8px;top:547.35px;height:16.25px;line-height:16.25px">Employee 9</div>
<div class="td" style="left:182px;width:80.3px;top:547.35px;height:16.25px;line-height:16.25px">HR</div>
<div class="td" style="left:262.3px;width:91.9px;top:547.35px;height:16.25px;line-height:16.25px">Project Alpha</div>
<div class="td" style="left:354.2px;width:102.8px;top:547.35px;height:16.25px;line-height:16.25px">Developer</div>
<div class="td" style="left:457px;width:77.6px;top:547.35px;height:16.25px;line-height:16.25px">31-Mar-24</div>
<div class="td" style="left:534.6px;width:77.3px;top:547.35px;height:16.25px;line-height:16.25px">13-May-24</div>
<div class="td" style="left:611.9px;width:89.3px;top:547.35px;height:16.25px;line-height:16.25px">120</div>
<div class="td" style="left:701.2px;width:81px;top:547.35px;height:16.25px;line-height:16.25px">51.40%</div>
<div class="td" style="left:782.2px;width:90.1px;top:547.35px;height:16.25px;line-height:16.25px">Partially Allocated</div>
<div class="td" style="left:872.3px;width:86.7px;top:547.35px;height:16.25px;line-height:16.25px">75%</div>
<div class="td" style="left:959px;width:87px;top:547.35px;height:16.25px;line-height:16.25px">Low</div>
<div class="td" style="left:1046px;width:153.6px;top:547.35px;height:16.25px;line-height:16.25px">Mar</div>
<div class="td" style="left:1199.6px;width:77.3px;top:547.35px;height:16.25px;line-height:16.25px">2024</div>
<div class="td" style="left:35.6px;width:68.6px;top:563.6px;height:16.25px;line-height:16.25px">RES0157</div>
<div class="td" style="left:104.2px;width:77.8px;top:563.6px;height:16.25px;line-height:16.25px">Employee 3</div>
<div class="td" style="left:182px;width:80.3px;top:563.6px;height:16.25px;line-height:16.25px">HR</div>
<div class="td" style="left:262.3px;width:91.9px;top:563.6px;height:16.25px;line-height:16.25px">Project Alpha</div>
<div class="td" style="left:354.2px;width:102.8px;top:563.6px;height:16.25px;line-height:16.25px">Developer</div>
<div class="td" style="left:457px;width:77.6px;top:563.6px;height:16.25px;line-height:16.25px">16-Feb-24</div>
<div class="td" style="left:534.6px;width:77.3px;top:563.6px;height:16.25px;line-height:16.25px">20-Mar-24</div>
<div class="td" style="left:611.9px;width:89.3px;top:563.6px;height:16.25px;line-height:16.25px">100</div>
<div class="td" style="left:701.2px;width:81px;top:563.6px;height:16.25px;line-height:16.25px">79.40%</div>
<div class="td" style="left:782.2px;width:90.1px;top:563.6px;height:16.25px;line-height:16.25px">Bench</div>
<div class="td" style="left:872.3px;width:86.7px;top:563.6px;height:16.25px;line-height:16.25px">63%</div>
<div class="td" style="left:959px;width:87px;top:563.6px;height:16.25px;line-height:16.25px">Moderate</div>
<div class="td" style="left:1046px;width:153.6px;top:563.6px;height:16.25px;line-height:16.25px">Feb</div>
<div class="td" style="left:1199.6px;width:77.3px;top:563.6px;height:16.25px;line-height:16.25px">2024</div>
<!-- frozen corner -->
<div class="a" style="left:0;top:107px;width:35px;height:18.7px;background:#f8f9fa;border-top:1px solid #c4c7c5"></div>
<div class="a" style="left:32px;top:107px;width:3px;height:18.7px;background:#c4c7c5"></div>
<div class="a" style="left:0;top:122.5px;width:35px;height:3px;background:#c4c7c5"></div>
<div class="a" style="left:0;top:579px;width:1280px;height:5px;background:#fff"></div>
<div class="a" style="left:0;top:579px;width:1280px;height:1px;background:#e6e6e6"></div>
<div id="hscroll"></div>
<div class="a" style="left:34.2px;top:579px;width:1px;height:5px;background:#c7c7c7"></div>
<div class="a" style="left:1265px;top:580px;width:15px;height:4px;background:#f6f6f6"></div>
<div class="a" style="left:1272px;top:581.5px;width:0;height:0;border-left:2.5px solid transparent;border-right:2.5px solid transparent;border-bottom:3px solid #777"></div>
</body></html>
